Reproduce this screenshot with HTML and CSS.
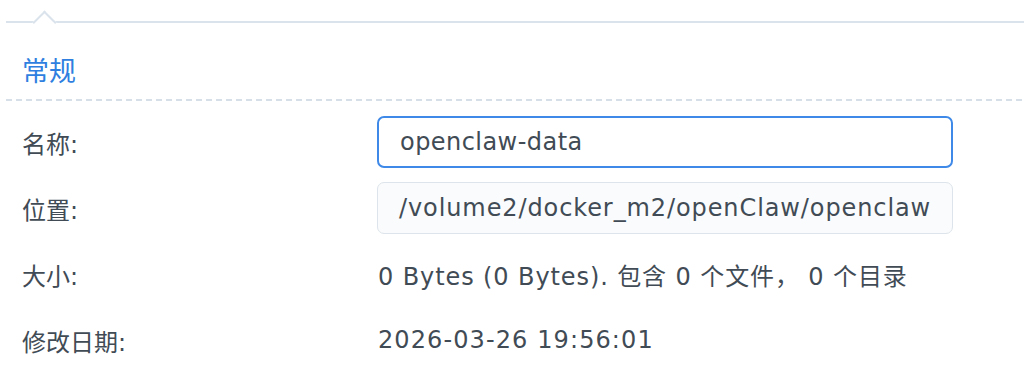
FILE: index.html
```html
<!DOCTYPE html>
<html lang="zh-CN">
<head>
<meta charset="utf-8">
<title>常规</title>
<link rel="stylesheet" href="styles.css">
</head>
<body>
<div class="panel">
  <div class="tabline"><span class="caret"></span></div>
  <h2 class="section-title">常规</h2>
  <div class="dashed"></div>
  <div class="form">
    <div class="label">名称:</div>
    <div class="field focused">openclaw-data</div>
    <div class="label">位置:</div>
    <div class="field readonly">/volume2/docker_m2/openClaw/openclaw</div>
    <div class="label">大小:</div>
    <div class="value">0 Bytes (0 Bytes). 包含 0 个文件，&nbsp;0 个目录</div>
    <div class="label">修改日期:</div>
    <div class="value date">2026-03-26 19:56:01</div>
  </div>
</div>
</body>
</html>
```

FILE: styles.css
```css
html, body {
  margin: 0;
  padding: 0;
  background: #ffffff;
}
body {
  font-family: "DejaVu Sans", "Noto Sans CJK SC", sans-serif;
  color: #414b55;
  font-size: 24px;
}
.panel {
  width: 1024px;
  height: 377px;
  overflow: hidden;
}
.tabline {
  position: relative;
  margin-left: 6px;
  height: 21px;
  border-bottom: 2px solid #dae3ec;
}
.caret {
  position: absolute;
  left: 30px;
  top: 14px;
  width: 15px;
  height: 15px;
  background: #ffffff;
  border-top: 2px solid #dae3ec;
  border-left: 2px solid #dae3ec;
  transform: rotate(45deg);
}
.section-title {
  margin: 0;
  padding: 33px 0 0 22px;
  height: 43px;
  font-size: 27px;
  font-weight: normal;
  line-height: 32px;
  color: #2f7fe0;
}
.dashed {
  margin-left: 6px;
  height: 2px;
  background: repeating-linear-gradient(to right, #d6dfe8 0 6px, transparent 6px 10px);
}
.form {
  display: grid;
  grid-template-columns: 355px 576px;
  grid-auto-rows: 52px;
  row-gap: 14px;
  padding: 15px 0 0 22px;
}
.label {
  display: flex;
  align-items: center;
  white-space: nowrap;
}
.value {
  display: flex;
  align-items: center;
  padding-left: 1px;
  white-space: nowrap;
  letter-spacing: 0.9px;
}
.value.date {
  letter-spacing: 1.1px;
}
.field {
  box-sizing: border-box;
  display: flex;
  align-items: center;
  padding-left: 21px;
  border-radius: 7px;
  white-space: nowrap;
  overflow: hidden;
  letter-spacing: 0.9px;
}
.field.focused {
  border: 2px solid #3f8ae8;
  background: #ffffff;
  letter-spacing: 0.45px;
}
.field.readonly {
  border: 1.5px solid #dde4eb;
  background: #fafbfc;
}
```
